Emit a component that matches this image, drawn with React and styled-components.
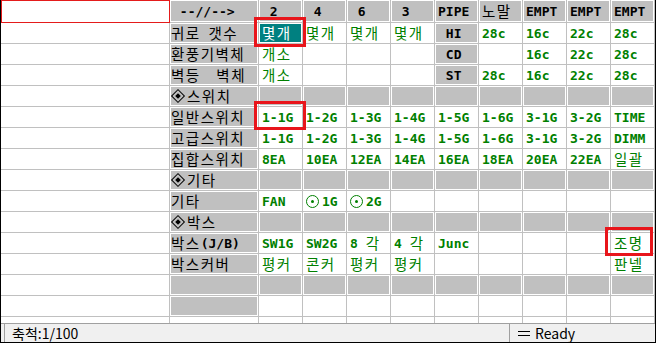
import React from 'react'
import styled, { createGlobalStyle } from 'styled-components'

const GlobalStyle = createGlobalStyle`
  html, body {
    margin: 0;
    padding: 0;
    background: #fff;
  }
  body {
    font-family: "Noto Sans CJK KR", "Noto Sans", sans-serif;
  }
`

const Window = styled.div`
  position: relative;
  width: 656px;
  height: 343px;
  box-sizing: border-box;
  border-left: 1px solid #000;
  border-right: 1px solid #000;
  border-bottom: 1px solid #000;
  display: flex;
  flex-direction: column;
  overflow: hidden;
`

const Sheet = styled.div`
  flex: 1;
  min-height: 0;
  overflow: hidden;
  display: grid;
  grid-template-columns: 169px 89px repeat(9, 44px);
  grid-template-rows: 23px;
  grid-auto-rows: 21px;
`

const Cell = styled.div`
  box-sizing: border-box;
  border-right: 1px solid #c0c0c0;
  border-bottom: 1px solid #c0c0c0;
  background: ${p => (p.$sel ? '#008080' : p.$gray ? '#c0c0c0' : '#fff')};
  box-shadow: inset 0 0 0 1px #fff;
  color: ${p => (p.$sel ? '#fff' : p.$green ? '#008000' : '#000')};
  display: flex;
  align-items: center;
  padding-left: ${p => p.$pad}px;
  white-space: pre;
  line-height: 1;
`

const Corner = styled.div`
  box-sizing: border-box;
  border: 1px solid #e41b1b;
  background: #fff;
`

const Blank = styled.div`
  box-sizing: border-box;
  border-right: 1px solid #c0c0c0;
  border-bottom: 1px solid #c0c0c0;
  background: #fff;
`

const Mono = styled.span`
  font-family: "DejaVu Sans Mono", "Liberation Mono", monospace;
  font-weight: bold;
  font-size: 13px;
`

const Hangul = styled.span`
  font-family: "Noto Sans CJK KR", "Noto Sans", sans-serif;
  font-size: 14.5px;
  letter-spacing: 1.5px;
`

/* ◈ bullet: outlined diamond holding a filled one */
const Diamond = styled.span`
  display: inline-flex;
  align-items: center;
  justify-content: center;
  box-sizing: border-box;
  width: 10px;
  height: 10px;
  margin: 0 4px 0 2px;
  border: 1px solid #000;
  transform: rotate(45deg);
  &::after {
    content: '';
    width: 4px;
    height: 4px;
    background: #000;
  }
`

const Dot = styled.span`
  display: inline-flex;
  align-items: center;
  justify-content: center;
  box-sizing: border-box;
  width: 13px;
  height: 13px;
  margin-right: 3px;
  border: 1px solid currentColor;
  border-radius: 50%;
  &::after {
    content: '';
    width: 3px;
    height: 3px;
    border-radius: 50%;
    background: currentColor;
  }
`

const StatusBar = styled.div`
  height: 19px;
  box-sizing: border-box;
  border-top: 1px solid #a0a0a0;
  background: #f0f0f0;
  display: flex;
  padding-left: 3px;
  font-size: 14px;
  line-height: 1;
  color: #000;
`

const Pane = styled.div`
  box-sizing: border-box;
  width: ${p => (p.$w ? `${p.$w}px` : 'auto')};
  flex: ${p => (p.$w ? 'none' : 1)};
  border-left: 1px solid #a0a0a0;
  padding-left: ${p => p.$pad}px;
  display: flex;
  align-items: center;
  white-space: pre;
`

const DoubleBar = styled.span`
  display: inline-block;
  width: 12px;
  height: 3px;
  border-top: 1px solid #000;
  border-bottom: 1px solid #000;
  margin-right: 5px;
`

const Mark = styled.div`
  position: absolute;
  box-sizing: border-box;
  left: ${p => p.$x}px;
  top: ${p => p.$y}px;
  width: ${p => p.$w}px;
  height: ${p => p.$h}px;
  border: 3px solid #e8151b;
  pointer-events: none;
`

function Runs({ text }) {
  const parts = text.match(/[\x20-\x7e]+|⊙|◈|[^\x20-\x7e⊙◈]+/g) || []
  return parts.map((p, i) => {
    if (p === '⊙') return <Dot key={i} />
    if (p === '◈') return <Diamond key={i} />
    if (/^[\x20-\x7e]+$/.test(p)) return <Mono key={i}>{p}</Mono>
    return <Hangul key={i}>{p}</Hangul>
  })
}

const g = t => ({ t, gray: true })
const grayRow = Array(9).fill(g(''))

const header = [' 2', ' 4', ' 6', ' 3', 'PIPE', '노말', 'EMPT', 'EMPT', 'EMPT']

const rows = [
  { label: '귀로 갯수', cells: [{ t: '몇개', sel: true }, '몇개', '몇개', '몇개', g(' HI'), '28c', '16c', '22c', '28c'] },
  { label: '환풍기벽체', cells: ['개소', '', '', '', g(' CD'), '', '16c', '22c', '28c'] },
  { label: '벽등  벽체', cells: ['개소', '', '', '', g(' ST'), '28c', '16c', '22c', '28c'] },
  { label: '◈스위치', cells: grayRow },
  { label: '일반스위치', cells: ['1-1G', '1-2G', '1-3G', '1-4G', '1-5G', '1-6G', '3-1G', '3-2G', 'TIME'] },
  { label: '고급스위치', cells: ['1-1G', '1-2G', '1-3G', '1-4G', '1-5G', '1-6G', '3-1G', '3-2G', 'DIMM'] },
  { label: '집합스위치', cells: ['8EA', '10EA', '12EA', '14EA', '16EA', '18EA', '20EA', '22EA', '일괄'] },
  { label: '◈기타', cells: grayRow },
  { label: '기타', cells: ['FAN', '⊙1G', '⊙2G', '', '', '', '', '', ''] },
  { label: '◈박스', cells: grayRow },
  { label: '박스(J/B)', cells: ['SW1G', 'SW2G', '8 각', '4 각', 'Junc', '', '', '', '조명'] },
  { label: '박스커버', cells: ['평커', '콘커', '평커', '평커', '', '', '', '', '판넬'] },
  { label: '', cells: grayRow },
  { label: '', cells: Array(9).fill('') },
]

const marks = [
  { x: 253, y: 17, w: 52, h: 30 },
  { x: 253, y: 101, w: 52, h: 29 },
  { x: 604, y: 227, w: 48, h: 29 },
]

export default function App() {
  return (
    <>
      <GlobalStyle />
      <Window>
        <Sheet>
          <Corner />
          <Cell $gray $pad={2}><Runs text=" --//-->" /></Cell>
          {header.map((h, i) => (
            <Cell key={i} $gray $pad={3}><Runs text={h} /></Cell>
          ))}

          {rows.map((r, ri) => (
            <React.Fragment key={ri}>
              <Blank />
              <Cell $gray $pad={1}><Runs text={r.label} /></Cell>
              {r.cells.map((c, ci) => {
                const cell = typeof c === 'string' ? { t: c } : c
                return (
                  <Cell key={ci} $gray={cell.gray} $sel={cell.sel} $green={!cell.gray} $pad={3}>
                    <Runs text={cell.t} />
                  </Cell>
                )
              })}
            </React.Fragment>
          ))}

          <Blank />
          <Blank />
          {Array(9).fill(0).map((_, i) => <Blank key={i} />)}
        </Sheet>

        <StatusBar>
          <Pane $w={505} $pad={7}>축척:1/100</Pane>
          <Pane $pad={8}><DoubleBar />Ready</Pane>
        </StatusBar>

        {marks.map((m, i) => (
          <Mark key={i} $x={m.x} $y={m.y} $w={m.w} $h={m.h} />
        ))}
      </Window>
    </>
  )
}
